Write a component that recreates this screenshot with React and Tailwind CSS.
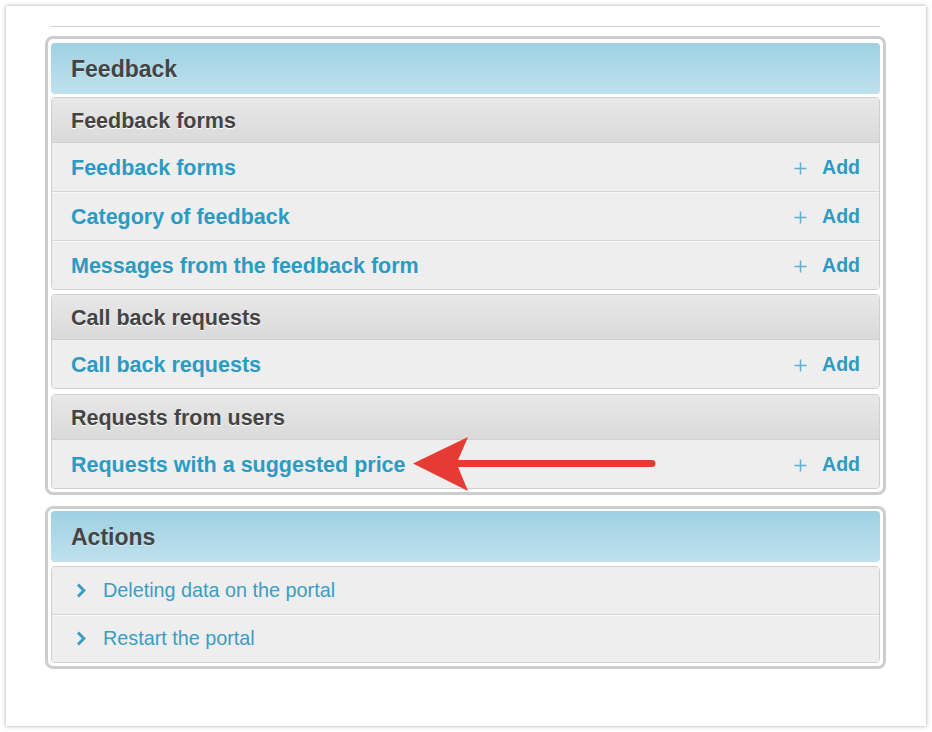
import React from "react";

const FONT = { fontFamily: '"Liberation Sans", Arial, Helvetica, sans-serif' };

function Plus() {
  return (
    <svg width="13" height="13" viewBox="0 0 13 13" className="shrink-0">
      <path d="M6.5 0.5V12.5M0.5 6.5H12.5" stroke="#5eb0d1" strokeWidth="1.5" fill="none" />
    </svg>
  );
}

function Chevron() {
  return (
    <svg width="10" height="15" viewBox="0 0 10 15" className="shrink-0">
      <path d="M2 1.5L7.8 7.5L2 13.5" stroke="#3b9dc4" strokeWidth="3" fill="none" strokeLinejoin="miter" />
    </svg>
  );
}

function BlueHeader({ children }) {
  return (
    <div className="h-[51px] rounded-[4px] bg-gradient-to-b from-[#9ed1e3] to-[#bfe1ed] flex items-center pl-[20px] pt-[2px]">
      <span className="text-[23px] font-bold text-[#444444] [text-shadow:0_1px_0_rgba(255,255,255,0.4)]">{children}</span>
    </div>
  );
}

function LinkRow({ label, first }) {
  return (
    <div
      className={
        "bg-[#eeeeee] flex items-center pl-[19px] pr-[19px] pt-[2px] " +
        (first ? "h-[48px]" : "h-[49px] border-t border-[#d6d6d6] shadow-[inset_0_1px_0_#f9f9f9]")
      }
    >
      <span className="text-[21.5px] font-bold text-[#2b9bc4] flex-1">{label}</span>
      <div className="flex items-center gap-[15px]">
        <Plus />
        <span className="text-[19.5px] font-bold text-[#2b9bc4]">Add</span>
      </div>
    </div>
  );
}

function Group({ title, rows, className = "" }) {
  return (
    <div className={"rounded-[4px] border border-[#cfcfcf] overflow-hidden " + className}>
      <div className="h-[45px] bg-gradient-to-b from-[#e8e8e8] to-[#dadada] border-b border-[#cfcfcf] flex items-center pl-[19px] pt-[2px]">
        <span className="text-[21.5px] font-bold text-[#444444] [text-shadow:0_1px_0_#ffffff]">{title}</span>
      </div>
      {rows.map((r, i) => (
        <LinkRow key={r} label={r} first={i === 0} />
      ))}
    </div>
  );
}

function ActionRow({ label, first }) {
  return (
    <div
      className={
        "bg-[#eeeeee] flex items-center pl-[24px] gap-[17px] " +
        (first ? "h-[47px]" : "h-[48px] border-t border-[#d6d6d6] shadow-[inset_0_1px_0_#f9f9f9]")
      }
    >
      <Chevron />
      <span className="text-[19.8px] text-[#3a9dc5]">{label}</span>
    </div>
  );
}

export default function App() {
  return (
    <div className="w-[932px] h-[732px] bg-white pt-[6px] pl-[6px]" style={FONT}>
      <div className="relative w-[920px] h-[720px] bg-white shadow-[0_0_4px_rgba(0,0,0,0.35)] pt-[20px] pl-[39px] pr-[40px]">
        <div className="h-px bg-[#d2d2d2] ml-[5px] mr-[6px]" />

        <div className="mt-[9px] border-[3px] border-[#cdcdcd] rounded-[8px] bg-white px-[3px] pt-[4px] pb-[3px] flex flex-col">
          <BlueHeader>Feedback</BlueHeader>
          <Group
            className="mt-[3px]"
            title="Feedback forms"
            rows={["Feedback forms", "Category of feedback", "Messages from the feedback form"]}
          />
          <Group className="mt-[4px]" title="Call back requests" rows={["Call back requests"]} />
          <Group className="mt-[5px]" title="Requests from users" rows={["Requests with a suggested price"]} />
        </div>

        <div className="mt-[11px] border-[3px] border-[#cdcdcd] rounded-[8px] bg-white px-[3px] pt-[2px] pb-[3px] flex flex-col">
          <BlueHeader>Actions</BlueHeader>
          <div className="mt-[4px] rounded-[4px] border border-[#cfcfcf] overflow-hidden">
            <ActionRow label="Deleting data on the portal" first />
            <ActionRow label="Restart the portal" />
          </div>
        </div>

        <svg
          className="absolute left-[404px] top-[426px]"
          width="250"
          height="64"
          viewBox="0 0 250 64"
        >
          <line x1="48" y1="31.5" x2="242" y2="31.5" stroke="#e53b33" strokeWidth="7" strokeLinecap="round" />
          <polygon points="3,31.5 58,5 48,28 48,35 58,59" fill="#e53b33" />
        </svg>
      </div>
    </div>
  );
}
